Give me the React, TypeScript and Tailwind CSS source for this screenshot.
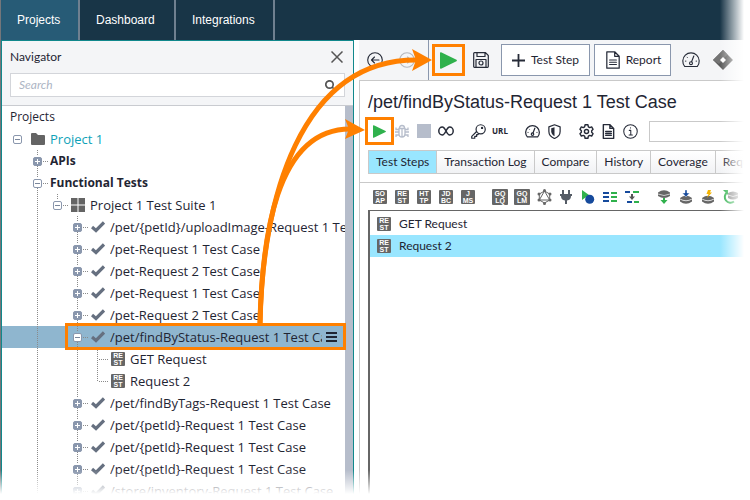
import { useState } from 'react';
import type { ReactNode } from 'react';
import clsx from 'clsx';

type Cell = 'blank' | 'line' | 'tee' | 'elbow';
type Toggle = 'first' | 'middle' | 'last';
type NodeIcon = 'folder' | 'suite' | 'check' | 'rest';

interface TreeRow {
  label: string;
  guides: Cell[];
  toggle?: Toggle;
  open?: boolean;
  icon?: NodeIcon;
  tone?: 'teal' | 'bold';
  selected?: boolean;
}

const caseRow = (label: string): TreeRow => ({
  label,
  guides: ['blank', 'line', 'blank'],
  toggle: 'middle',
  icon: 'check',
});

const rows: TreeRow[] = [
  { label: 'Project 1', guides: [], toggle: 'first', open: true, icon: 'folder', tone: 'teal' },
  { label: 'APIs', guides: ['blank'], toggle: 'middle', tone: 'bold' },
  { label: 'Functional Tests', guides: ['blank'], toggle: 'middle', open: true, tone: 'bold' },
  { label: 'Project 1 Test Suite 1', guides: ['blank', 'line'], toggle: 'last', open: true, icon: 'suite' },
  caseRow('/pet/{petId}/uploadImage-Request 1 Test Case'),
  caseRow('/pet-Request 1 Test Case'),
  caseRow('/pet-Request 2 Test Case'),
  caseRow('/pet-Request 1 Test Case'),
  caseRow('/pet-Request 2 Test Case'),
  { ...caseRow('/pet/findByStatus-Request 1 Test Case'), open: true, selected: true },
  { label: 'GET Request', guides: ['blank', 'line', 'blank', 'line', 'tee'], icon: 'rest' },
  { label: 'Request 2', guides: ['blank', 'line', 'blank', 'line', 'elbow'], icon: 'rest' },
  caseRow('/pet/findByTags-Request 1 Test Case'),
  caseRow('/pet/{petId}-Request 1 Test Case'),
  caseRow('/pet/{petId}-Request 1 Test Case'),
  caseRow('/pet/{petId}-Request 1 Test Case'),
  caseRow('/store/inventory-Request 1 Test Case'),
];

const tabs = ['Test Steps', 'Transaction Log', 'Compare', 'History', 'Coverage', 'Requirements'];
const steps = ['GET Request', 'Request 2'];

function Badge({ top, bottom, large }: { top: string; bottom: string; large?: boolean }) {
  return (
    <span
      className={clsx(
        'flex shrink-0 flex-col items-center justify-center rounded-[1px] bg-[#666] font-["Liberation_Sans"] text-[7px] leading-[7px] font-bold text-white',
        large ? 'size-4' : 'size-[14px]',
      )}
    >
      <span>{top}</span>
      <span>{bottom}</span>
    </span>
  );
}

function Guide({ kind }: { kind: Cell }) {
  return (
    <svg width="20" height="22" className="shrink-0 overflow-visible" stroke="#8a8a8a" strokeDasharray="1 1" aria-hidden="true">
      {kind !== 'blank' && <path d={kind === 'elbow' ? 'M10.5 0V11' : 'M10.5 0V22'} />}
      {(kind === 'tee' || kind === 'elbow') && <path d="M12 11.5H22" />}
    </svg>
  );
}

function ToggleBox({ kind, open, label }: { kind: Toggle; open?: boolean; label: string }) {
  return (
    <button type="button" className="h-[22px] w-5 shrink-0" aria-label={`${open ? 'Collapse' : 'Expand'} ${label}`}>
      <svg width="20" height="22" className="overflow-visible" fill="none">
        <g stroke="#8a8a8a" strokeDasharray="1 1">
          {kind !== 'first' && <path d="M10.5 0V6M16 11.5H22" />}
          {kind === 'middle' && <path d="M10.5 16V22" />}
        </g>
        <rect x="6.5" y="7.5" width="8" height="8" rx="1.5" fill={open ? '#fff' : '#8a97ad'} stroke="#8a97ad" />
        <path d="M8 11.5H13" stroke={open ? '#7b879c' : '#fff'} />
        {!open && <path d="M10.5 9V14" stroke="#fff" />}
      </svg>
    </button>
  );
}

function TreeIcon({ icon }: { icon: NodeIcon }) {
  if (icon === 'rest') return <Badge top="RE" bottom="ST" />;
  return (
    <svg width="14" height="14" viewBox="0 0 14 14" className="shrink-0" fill="#646464" aria-hidden="true">
      {icon === 'folder' && <path d="M0 2Q0 1 1 1H5L7 3H13Q14 3 14 4V12Q14 13 13 13H1Q0 13 0 12Z" />}
      {icon === 'suite' && <path d="M0 0H6.5V6.5H0ZM7.5 0H14V6.5H7.5ZM0 7.5H6.5V14H0ZM7.5 7.5H14V14H7.5Z" />}
      {icon === 'check' && <path d="M1 7L5 10.5L13 2.5" fill="none" stroke="#667080" strokeWidth="3.2" />}
    </svg>
  );
}

function Play({ size }: { size: number }) {
  return (
    <svg width={size} height={size} viewBox="0 0 16 18" preserveAspectRatio="none" fill="#2fb14c">
      <path d="M0 1Q0 0 1 .3L15.5 8.3Q16.3 9 15.5 9.7L1 17.7Q0 18 0 17Z" />
    </svg>
  );
}

function Tool({ label, className, children }: { label: string; className?: string; children: ReactNode }) {
  return (
    <button type="button" aria-label={label} className={clsx('flex size-[22px] shrink-0 items-center justify-center', className)}>
      {children}
    </button>
  );
}

function Glyph({ size = 16, stroke = 1.3, children }: { size?: number; stroke?: number; children: ReactNode }) {
  return (
    <svg width={size} height={size} viewBox="0 0 16 16" fill="none" stroke="#262b38" strokeWidth={stroke} strokeLinecap="round" strokeLinejoin="round">
      {children}
    </svg>
  );
}

function Gauge({ size, stroke }: { size: number; stroke?: number }) {
  return (
    <Glyph size={size} stroke={stroke}>
      <path d="M2.5 13.8A7.3 7.3 0 1 1 13.5 13.8Z" />
      <path d="M10.5 4.5L8.5 9.5" />
      <circle cx="8" cy="10.8" r="1.3" />
      <path d="M3 9H3.5M4.5 5.5L4.8 5.8M12.5 9H13" strokeWidth=".8" />
    </Glyph>
  );
}

function DocIcon({ size, stroke }: { size: number; stroke?: number }) {
  return (
    <Glyph size={size} stroke={stroke}>
      <path d="M2.5 .7H9.5L13.5 4.7V15.3H2.5ZM9.5 .7V4.7H13.5M5 8H11M5 10H11M5 12H11" />
    </Glyph>
  );
}

function Database({ children }: { children?: ReactNode }) {
  return (
    <svg width="14" height="14" viewBox="0 0 14 14">
      {children}
    </svg>
  );
}

function Navigator() {
  const [query, setQuery] = useState('');

  return (
    <aside className="flex w-[353px] shrink-0 flex-col border border-b-0 border-[#10888c] bg-white">
      <div className="border-b border-[#c9cbd0] bg-[#f4f5f7] px-2 pb-2">
        <div className="flex h-8 items-center justify-between pr-[2px]">
          <h2>Navigator</h2>
          <button type="button" aria-label="Close navigator">
            <svg width="12" height="12" stroke="#555" strokeWidth="1.5">
              <path d="M.5 .5L11.5 11.5M11.5 .5L.5 11.5" />
            </svg>
          </button>
        </div>
        <label className="flex h-6 items-center border border-[#d3d5da] bg-white px-2">
          <input
            type="text"
            placeholder="Search"
            aria-label="Search"
            value={query}
            onChange={(e) => setQuery(e.target.value)}
            className="min-w-0 flex-1 italic outline-none placeholder:text-[#adb5c4]"
          />
          <svg width="11" height="11" fill="none" stroke="#555" strokeWidth="1.7">
            <circle cx="4.5" cy="4.5" r="3.7" />
            <path d="M7 7L10.5 10.5" />
          </svg>
        </label>
      </div>
      <div className='flex min-h-0 flex-1 font-["Open_Sans"] text-[13px] leading-[22px]'>
        <div className="min-w-0 flex-1 overflow-hidden">
          <h3 className="h-[22px] px-2 text-[12px]">Projects</h3>
          <ul>
            {rows.map((row, i) => (
              <li key={i} className={clsx('flex h-[22px] items-center pl-[5px]', row.selected && 'bg-[#8fb6cf]')}>
                {row.guides.map((kind, g) => (
                  <Guide key={g} kind={kind} />
                ))}
                {row.toggle && <ToggleBox kind={row.toggle} open={row.open} label={row.label} />}
                <span className={clsx('flex min-w-0 flex-1 items-center gap-[5px]', row.icon ? 'pl-1' : 'pl-[3px]')}>
                  {row.icon && <TreeIcon icon={row.icon} />}
                  <span
                    className={clsx(
                      'overflow-hidden whitespace-nowrap',
                      row.tone === 'teal' && 'font-medium text-[#0ea2b8]',
                      row.tone === 'bold' && 'text-[12px] font-bold',
                    )}
                  >
                    {row.label}
                  </span>
                </span>
                {row.selected && (
                  <button type="button" aria-label="Menu" className="mr-2 ml-1 shrink-0">
                    <svg width="11" height="10" stroke="#1f2533" strokeWidth="2">
                      <path d="M0 1H11M0 5H11M0 9H11" />
                    </svg>
                  </button>
                )}
              </li>
            ))}
          </ul>
        </div>
        <div className="w-2 shrink-0 bg-[#b6bdcb]" />
      </div>
    </aside>
  );
}

function MainToolbar() {
  return (
    <div className="flex h-[41px] shrink-0 items-center border-b border-[#c9c9c9] bg-[#f4f5f7]">
      <div className="flex h-full w-[70px] shrink-0 items-center gap-[10px] border-r border-[#8a97ad] pl-[5px]">
        <Tool label="Back">
          <Glyph stroke={1.1}>
            <path d="M8 .7A7.3 7.3 0 1 1 8 15.3A7.3 7.3 0 1 1 8 .7M12 8H4.5M7.5 5L4.5 8L7.5 11" />
          </Glyph>
        </Tool>
        <Tool label="Forward" className="opacity-30">
          <Glyph stroke={1.1}>
            <path d="M8 .7A7.3 7.3 0 1 1 8 15.3A7.3 7.3 0 1 1 8 .7M4 8H11.5M8.5 5L11.5 8L8.5 11" />
          </Glyph>
        </Tool>
      </div>
      <button type="button" aria-label="Run" className="ml-[3px] flex h-8 w-[33px] shrink-0 items-center justify-center border-3 border-[#ff8000]">
        <Play size={17} />
      </button>
      <Tool label="Save" className="ml-[5px]">
        <Glyph stroke={1.2}>
          <path d="M1.5 .7H12.5L15.3 3.5V14.5Q15.3 15.3 14.5 15.3H1.5Q.7 15.3 .7 14.5V1.5Q.7 .7 1.5 .7ZM4 .7V4.5H12V.7M3 15V7.5H13V15" />
          <circle cx="8" cy="11" r="2" />
        </Glyph>
      </Tool>
      <button type="button" className="ml-[9px] flex h-8 w-[89px] shrink-0 items-center justify-center gap-[6px] border border-[#8a97ad] bg-white">
        <svg width="13" height="13" stroke="#262b38" strokeWidth="1.8">
          <path d="M0 6.5H13M6.5 0V13" />
        </svg>
        Test Step
      </button>
      <button type="button" className="ml-1 flex h-8 w-[77px] shrink-0 items-center justify-center gap-1 border border-[#8a97ad] bg-white">
        <DocIcon size={18} stroke={1.1} />
        Report
      </button>
      <Tool label="Load test" className="ml-[9px]">
        <Gauge size={18} stroke={1} />
      </Tool>
      <Tool label="Extensions" className="ml-[10px]">
        <svg width="20" height="20" viewBox="0 0 20 20" className="shrink-0">
          <path d="M10 0L20 10L10 20L0 10Z" fill="#5a5a5a" />
          <path d="M10 0L14.5 4.5L6 14L0 10Z" fill="#747474" />
          <path d="M10 7L13 10L10 13L7 10Z" fill="#fff" />
        </svg>
      </Tool>
    </div>
  );
}

function RequestTools() {
  return (
    <div className="flex h-7 shrink-0 items-center pl-[5px]">
      <button type="button" aria-label="Run test case" className="flex h-7 w-[29px] shrink-0 items-center justify-center border-3 border-[#ff8000]">
        <Play size={13} />
      </button>
      <Tool label="Debug" className="-ml-[3px]">
        <svg width="14" height="14" fill="none" stroke="#b6bdcb" strokeWidth="1.3">
          <path d="M4 4.5H10V10Q10 13 7 13Q4 13 4 10ZM4.5 4Q4.5 1.5 7 1.5Q9.5 1.5 9.5 4M7 5V13M0 8H4M10 8H14M1 3.5V5.5H4M13 3.5V5.5H10M1 13V11H4M13 13V11H10" />
        </svg>
      </Tool>
      <Tool label="Stop">
        <span className="size-[14px] bg-[#b6bdcb]" />
      </Tool>
      <Tool label="Loop">
        <svg width="16" height="10" fill="none" stroke="#262b38" strokeWidth="1.5">
          <path d="M8 5C6.5 2 5.5 1 4.3 1A3.5 4 0 0 0 4.3 9C5.5 9 6.5 8 8 5C9.5 2 10.5 1 11.7 1A3.5 4 0 0 1 11.7 9C10.5 9 9.5 8 8 5Z" />
        </svg>
      </Tool>
      <Tool label="Credentials" className="ml-[10px]">
        <Glyph size={15}>
          <circle cx="10.3" cy="5.7" r="4.9" />
          <circle cx="11.8" cy="4.2" r=".6" />
          <path d="M6 8L.8 13.2V15.2H4V13.3H6V11.3H7.3L8.3 10.3" />
        </Glyph>
      </Tool>
      <Tool label="Target URL">
        <span className='font-["Open_Sans"] text-[8px] leading-none font-bold'>URL</span>
      </Tool>
      <Tool label="Performance" className="ml-[10px]">
        <Gauge size={15} />
      </Tool>
      <Tool label="Security">
        <Glyph size={15}>
          <path d="M8 .8L14 3V8Q14 13 8 15.5Q2 13 2 8V3Z" />
          <path d="M8 3.5V13Q4.5 11 4.5 8V4.5Z" fill="#262b38" stroke="none" />
        </Glyph>
      </Tool>
      <Tool label="Options" className="ml-[10px]">
        <Glyph size={15} stroke={1.5}>
          <path d="M6.5 .8H9.5L10 3L11.5 3.9L13.5 3.1L15 5.7L13.5 7.2V8.8L15 10.3L13.5 12.9L11.5 12.1L10 13L9.5 15.2H6.5L6 13L4.5 12.1L2.5 12.9L1 10.3L2.5 8.8V7.2L1 5.7L2.5 3.1L4.5 3.9L6 3Z" />
          <circle cx="8" cy="8" r="2.2" />
        </Glyph>
      </Tool>
      <Tool label="Description">
        <DocIcon size={15} stroke={1.5} />
      </Tool>
      <Tool label="Properties">
        <Glyph size={15} stroke={1.1}>
          <circle cx="8" cy="8" r="7.2" />
          <path d="M6.7 6.8H8.3V11.5M6.5 11.7H10M8 4V4.2" />
        </Glyph>
      </Tool>
      <input type="text" aria-label="Endpoint" className="ml-2 h-[21px] min-w-[100px] flex-1 border border-[#c9c9c9] bg-white" />
    </div>
  );
}

function StepTools() {
  return (
    <div className="flex h-[27px] shrink-0 items-center pl-[9px]">
      <Tool label="SOAP request"><Badge top="SO" bottom="AP" /></Tool>
      <Tool label="REST request"><Badge top="RE" bottom="ST" /></Tool>
      <Tool label="HTTP request"><Badge top="HT" bottom="TP" /></Tool>
      <Tool label="JDBC request"><Badge top="JD" bottom="BC" /></Tool>
      <Tool label="JMS request"><Badge top="J" bottom="MS" /></Tool>
      <Tool label="GraphQL query" className="ml-[10px]"><Badge top="GQ" bottom="LQ" large /></Tool>
      <Tool label="GraphQL mutation"><Badge top="GQ" bottom="LM" large /></Tool>
      <Tool label="GraphQL">
        <svg width="15" height="16" viewBox="0 0 15 16" fill="none" stroke="#666">
          <path d="M7.5 2L12.7 5V11L7.5 14L2.3 11V5ZM7.5 2L12.7 11H2.3Z" />
          <g fill="#666" stroke="none">
            <circle cx="7.5" cy="1.5" r="1.5" />
            <circle cx="13" cy="5" r="1.5" />
            <circle cx="13" cy="11" r="1.5" />
            <circle cx="7.5" cy="14.5" r="1.5" />
            <circle cx="2" cy="11" r="1.5" />
            <circle cx="2" cy="5" r="1.5" />
          </g>
        </svg>
      </Tool>
      <Tool label="Plug">
        <svg width="12" height="14" fill="#555c66">
          <path d="M2 0H4V4H8V0H10V4H12V6H11Q11 10 7 10.5V14H5V10.5Q1 10 1 6H0V4H2Z" />
        </svg>
      </Tool>
      <Tool label="Run step">
        <svg width="14" height="14">
          <path d="M1 0L8 5L1 10Z" fill="#2fb14c" />
          <circle cx="8.7" cy="9.3" r="4.5" fill="#164a9c" />
        </svg>
      </Tool>
      <Tool label="Assertions">
        <svg width="14" height="12" strokeWidth="2">
          <path d="M0 2H6M0 6H6M0 10H6" stroke="#164a9c" />
          <path d="M8 2H14M8 6H14M8 10H14" stroke="#2fb14c" />
        </svg>
      </Tool>
      <Tool label="Transfer">
        <svg width="14" height="14" strokeWidth="2">
          <path d="M0 2H5M2 12H7" stroke="#164a9c" />
          <path d="M8 2H14M9 12H14" stroke="#2fb14c" />
          <path d="M7 4V7" stroke="#555" />
          <path d="M4 6.5H10L7 10Z" fill="#555" />
        </svg>
      </Tool>
      <Tool label="Data source" className="ml-[10px]">
        <Database>
          <path d="M1 2.5Q7 -2 13 2.5V6Q7 10 1 6Z" fill="#666" />
          <path d="M1 4Q7 7 13 4" fill="none" stroke="#ccc" />
          <path d="M6 8H8V10H10.5L7 14L3.5 10H6Z" fill="#2fb14c" />
        </Database>
      </Tool>
      <Tool label="Data sink">
        <Database>
          <path d="M1 8Q7 3.5 13 8V11.5Q7 16 1 11.5Z" fill="#666" />
          <path d="M1 9Q7 12.5 13 9" fill="none" stroke="#ddd" />
          <path d="M6 0H8V3H10.5L7 7L3.5 3H6Z" fill="#164a9c" stroke="#fff" strokeWidth=".4" />
        </Database>
      </Tool>
      <Tool label="Data generator">
        <Database>
          <path d="M1 8Q7 3.5 13 8V11.5Q7 16 1 11.5Z" fill="#666" />
          <path d="M1 9Q7 12.5 13 9" fill="none" stroke="#ddd" />
          <path d="M7 0H10L9 2.5H11L6 8L7.5 4H5.5Z" fill="#f5b400" />
        </Database>
      </Tool>
      <Tool label="Data loop">
        <svg width="16" height="14" className="shrink-0">
          <path d="M5 2.5A5.5 5.5 0 1 0 12 11.5" fill="none" stroke="#2fb14c" strokeWidth="2" />
          <path d="M1 0H6V5Z" fill="#2fb14c" />
          <path d="M6 3Q11 0 16 3V8Q11 11 6 8Z" fill="#888" />
          <path d="M6 5Q11 8 16 5" fill="none" stroke="#ddd" />
        </svg>
      </Tool>
    </div>
  );
}

function TestCasePanel() {
  const [tab, setTab] = useState(0);
  const [step, setStep] = useState(1);

  return (
    <main className="ml-[5px] flex min-w-0 flex-1 flex-col overflow-hidden">
      <MainToolbar />
      <div className="flex min-h-0 flex-1 flex-col border-l border-[#c9c9c9]">
        <h1 className='flex h-9 shrink-0 items-center pt-[5px] pl-2 font-["Liberation_Sans"] text-[18px] leading-5 whitespace-nowrap'>
          /pet/findByStatus-Request 1 Test Case
        </h1>
        <RequestTools />
        <div role="tablist" className="mt-[5px] ml-2 flex h-6 shrink-0 border border-r-0 border-[#c9c9c9]">
          {tabs.map((name, i) => (
            <button
              key={name}
              type="button"
              role="tab"
              aria-selected={i === tab}
              onClick={() => setTab(i)}
              className={clsx(
                'shrink-0 border-r border-[#c9c9c9] px-[7px] whitespace-nowrap',
                i === tab ? 'bg-[#99e6ff]' : 'bg-linear-to-b from-white to-[#f1f2f4]',
              )}
            >
              {name}
            </button>
          ))}
        </div>
        <div className="mt-2 border-t border-[#c9c9c9]">
          <StepTools />
        </div>
        <ul className="ml-2 min-h-0 flex-1 border-t border-l-2 border-[#666] pt-[2px]">
          {steps.map((name, i) => (
            <li key={name}>
              <button
                type="button"
                onClick={() => setStep(i)}
                className={clsx('flex h-[22px] w-full items-center gap-2 pl-[7px]', i === step && 'bg-[#99e6ff]')}
              >
                <Badge top="RE" bottom="ST" />
                {name}
              </button>
            </li>
          ))}
        </ul>
      </div>
    </main>
  );
}

function Callouts() {
  return (
    <svg width="480" height="360" className="pointer-events-none absolute top-0 left-0" fill="none" stroke="#ff8000" aria-hidden="true">
      <rect x="66.5" y="324.5" width="278" height="24" strokeWidth="3" />
      <path d="M260 324C262 200 300 60 416 60" strokeWidth="5" />
      <path d="M260 324C262 240 275 129 350 129" strokeWidth="5" />
      <path d="M432 60L412 49L416 60L412 71Z" fill="#ff8000" stroke="none" />
      <path d="M365 130L345 119L349 129L345 139Z" fill="#ff8000" stroke="none" />
    </svg>
  );
}

export default function App() {
  return (
    <div className='relative flex h-screen flex-col overflow-hidden bg-white font-["Lato",sans-serif] text-[12px] leading-4 text-[#1f2533]'>
      <nav className='flex h-10 shrink-0 border-l border-[#75767a] bg-[#183547] font-["Liberation_Sans"] text-[12px] text-white'>
        <a href="#projects" className="flex min-w-[79px] items-center border-r-2 border-[#6f8090] bg-[#275b76] px-4">Projects</a>
        <a href="#dashboard" className="flex min-w-24 items-center border-r-2 border-[#6f8090] px-4">Dashboard</a>
        <a href="#integrations" className="flex min-w-[99px] items-center border-r-2 border-[#6f8090] px-4">Integrations</a>
      </nav>
      <div className="flex min-h-0 flex-1 border-l border-[#75767a]">
        <Navigator />
        <TestCasePanel />
      </div>
      <Callouts />
      <div className="pointer-events-none absolute inset-y-0 right-0 w-[30px] bg-linear-to-r from-transparent to-white to-80%" />
      <div className="pointer-events-none absolute inset-x-0 bottom-0 h-[30px] bg-linear-to-b from-transparent to-white to-80%" />
    </div>
  );
}
